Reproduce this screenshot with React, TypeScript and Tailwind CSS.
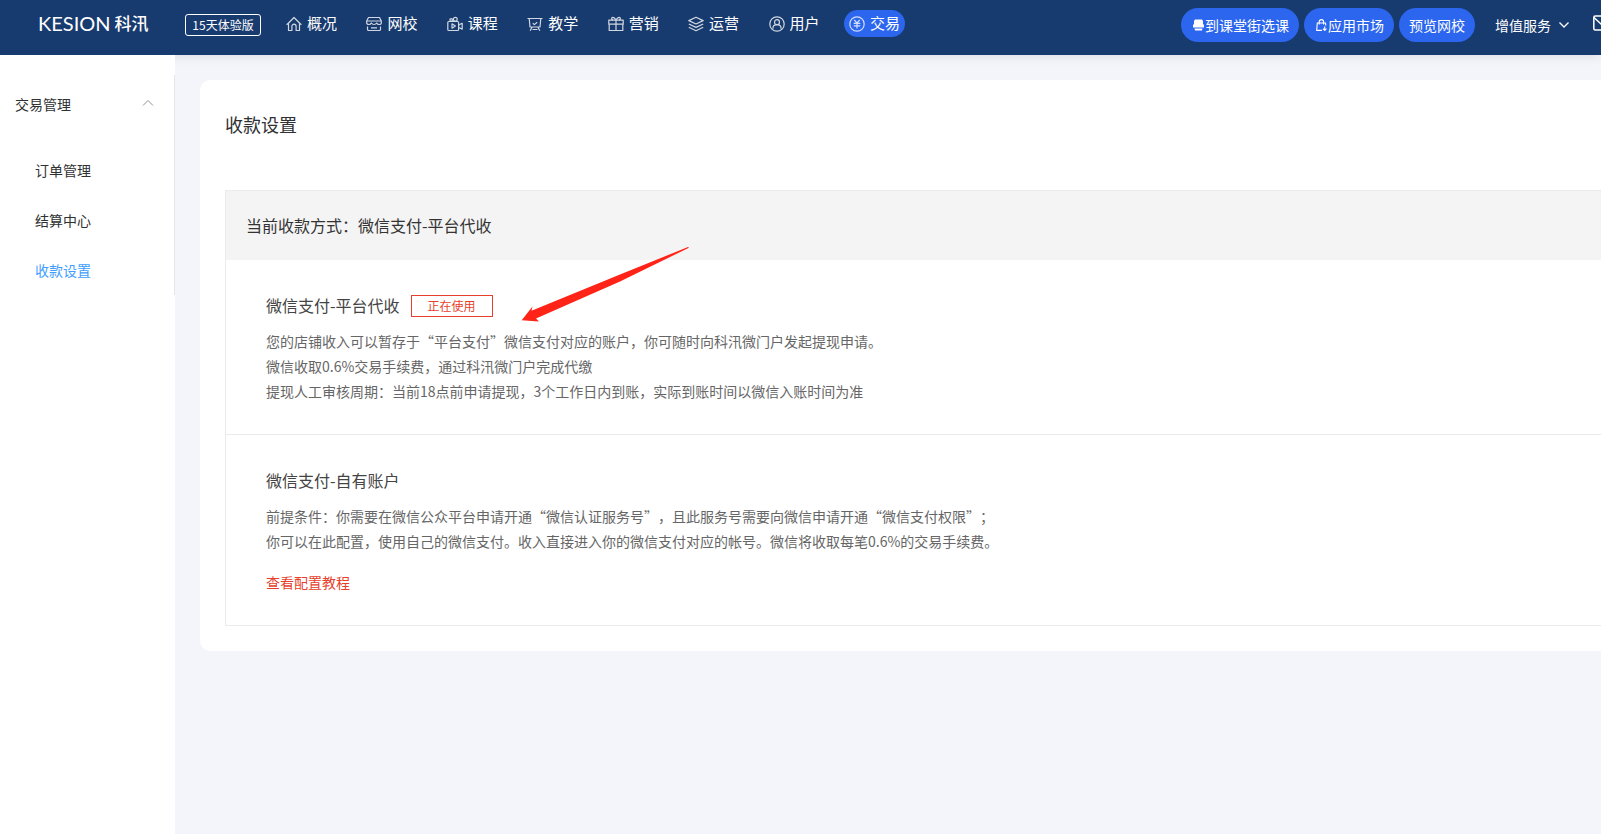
import React from 'react';

const navItems = [
  { label: '概况', icon: 'home' },
  { label: '网校', icon: 'shop' },
  { label: '课程', icon: 'camera' },
  { label: '教学', icon: 'board' },
  { label: '营销', icon: 'gift' },
  { label: '运营', icon: 'layers' },
  { label: '用户', icon: 'user' },
  { label: '交易', icon: 'yen', active: true },
];

const sideItems = [
  { label: '订单管理' },
  { label: '结算中心' },
  { label: '收款设置', active: true },
];

const iconShapes: Record<string, React.ReactNode> = {
  home: (
    <>
      <path d="M.6 8.800 2 7.500 8 1.500l6 6 1.400 1.300" />
      <path d="M2.500 7.200v7.300h3.400v-4.200a2.100 2.100 0 0 1 4.200 0v4.200h3.400V7.200" />
    </>
  ),
  shop: (
    <>
      <path d="M2.500 1.500h11l1.800 3.500v2c0 1-1 1.500-2.200 1.500S11 7.900 10.600 7C10 8 9.200 8.500 8 8.500S6 8 5.400 7C5 7.900 4 8.500 2.900 8.500S.7 8 .7 7V5z" />
      <path d="M.8 5h14.400M1.500 10.500v2.700c0 .8.500 1.300 1.300 1.300h10.400c.8 0 1.300-.5 1.300-1.300v-2.700M5 11.800h6" />
    </>
  ),
  camera: (
    <>
      <rect x=".8" y="5.500" width="10.800" height="9" rx="1" />
      <path d="M11.600 9l3.600-1.700v5.800l-3.600-1.600M5 7.800l3.400 2.200L5 12.200z" />
      <circle cx="4.200" cy="3.900" r="1.300" />
      <circle cx="8.300" cy="3.300" r="1.900" />
    </>
  ),
  board: (
    <>
      <path d="M.5 2.500h15M2.200 2.500 3 11h10l.8-8.500M5 11.200l-1.800 3.600M11 11.200l1.800 3.600M5.800 7.200l1.600 1.400 2.800-2.400M5.500 13.500h5" />
    </>
  ),
  gift: (
    <>
      <rect x=".8" y="4.200" width="14.400" height="4" />
      <path d="M1.200 8.200v6.300h13.600V8.200M8 4.200v10.300M8 4C6.500 1.500 4.500.8 3.800 2c-.5 1 .2 2 1.200 2M8 4c1.500-2.500 3.500-3.200 4.200-2 .5 1-.2 2-1.200 2" />
    </>
  ),
  layers: (
    <>
      <path d="M8 1.200l7.200 3.400L8 8 .8 4.600zM.8 8 8 11.400 15.200 8M.8 11.300 8 14.700l7.200-3.400" />
    </>
  ),
  user: (
    <>
      <circle cx="8" cy="8" r="7.200" />
      <circle cx="8" cy="6.200" r="2.500" />
      <path d="M4 12.800V12c0-2 1.600-3.300 4-3.300s4 1.300 4 3.300v.8" />
    </>
  ),
  yen: (
    <>
      <circle cx="8" cy="8" r="7.200" />
      <path d="M5.200 3.800 8 7l2.800-3.200M8 7v5.500M4.700 7.300h6.600M4.700 9.800h6.600" />
    </>
  ),
};

function NavIcon({ name }: { name: string }) {
  return (
    <svg
      viewBox="0 0 16 16"
      className="size-4 shrink-0 opacity-80"
      fill="none"
      stroke="currentColor"
      strokeWidth="1.2"
      strokeLinejoin="round"
    >
      {iconShapes[name]}
    </svg>
  );
}

function Header() {
  return (
    <header className="flex h-[55px] items-start overflow-hidden bg-[#183b6f] pl-[38px] text-white shadow-[0_2px_10px_rgba(0,0,0,0.09)]">
      <a href="#" className="mt-[11px] flex h-6 w-28 shrink-0 items-center gap-1">
        <span className="font-[Lato,sans-serif] text-xl leading-6">KESION</span>
        <span className="text-[17px] leading-6 font-medium whitespace-nowrap">科汛</span>
      </a>
      <span className="mt-3.5 ml-[35px] flex h-[22px] w-[76px] shrink-0 items-center justify-center rounded-[3px] border border-white text-xs">
        15天体验版
      </span>
      <nav className="mt-2.5 ml-5 flex w-[624px] shrink-0 justify-between">
        {navItems.map((item) => (
          <a
            key={item.label}
            href="#"
            className={`flex h-[27px] items-center gap-[5px] rounded-full px-[5px] text-[15px] ${
              item.active ? 'bg-[#2c66ee]' : ''
            }`}
          >
            <NavIcon name={item.icon} />
            {item.label}
          </a>
        ))}
      </nav>

      <div className="mt-2 -mr-2 ml-auto flex h-[34px] shrink-0 items-center gap-[5px] text-sm">
        <button type="button" className="flex h-full items-center gap-px rounded-full bg-[#2c66ee] pr-2.5 pl-3">
          <svg viewBox="0 0 11 12" className="h-3 w-[11px]" fill="currentColor">
            <path d="M2 .500h7l1 1.500v3l1 1v2.500H0V6l1-1V2z" />
            <path d="M1.500 9.500h8l-.5 2H2z" />
          </svg>
          到课堂街选课
        </button>
        <button type="button" className="flex h-full items-center gap-px rounded-full bg-[#2c66ee] pr-2.5 pl-3">
          <svg viewBox="0 0 11 12" className="h-3 w-[11px]" fill="none" stroke="currentColor" strokeWidth="1.100">
            <path d="M6 11.400H.700L1.300 4h8.200l.3 2.500M3.200 5.500V2.800a2.200 2.200 0 0 1 4.400 0v2.700M8.700 7.500v4M6.900 9.600l1.800 1.800 1.800-1.800" />
          </svg>
          应用市场
        </button>
        <button type="button" className="h-full rounded-full bg-[#2c66ee] px-2.5">
          预览网校
        </button>
        <button type="button" className="ml-[15px] flex h-full items-center gap-2">
          增值服务
          <svg viewBox="0 0 10 6" className="h-1.5 w-2.5" fill="none" stroke="currentColor" strokeWidth="1.300">
            <path d="M.5.5 5 5 9.500.5" />
          </svg>
        </button>
        <button type="button" aria-label="消息" className="ml-[19px]">
          <svg viewBox="0 0 16 16" className="mb-1 size-4" fill="none" stroke="currentColor" strokeWidth="1.500">
            <rect x=".8" y="1" width="14.400" height="14" rx="1.500" />
            <path d="M1 2.500 8 9l7-6.500" />
          </svg>
        </button>
      </div>
    </header>
  );
}

function Sidebar() {
  return (
    <aside className="relative w-[175px] shrink-0 bg-white pt-5 text-sm text-[#303133]">
      <div className="border-r border-[#e6e6e6]">
        <button type="button" className="flex h-[60px] w-full items-center justify-between pr-5 pb-0.5 pl-[15px]">
          交易管理
          <svg viewBox="0 0 12 12" className="mb-0.5 size-3" fill="none" stroke="#909399">
            <path d="M1 8.500 6 3.500l5 5" />
          </svg>
        </button>
        <ul className="pt-2.5">
          {sideItems.map((item) => (
            <li key={item.label}>
              <a
                href="#"
                className={`flex h-[50px] items-center pl-[35px] ${item.active ? 'text-[#409eff]' : ''}`}
              >
                {item.label}
              </a>
            </li>
          ))}
        </ul>
      </div>
    </aside>
  );
}

function Arrow() {
  return (
    <svg viewBox="0 0 168 76" className="pointer-events-none absolute top-[166px] left-[321px] h-[76px] w-[168px]">
      <path
        d="M.700 74.300 11.500 60.500 10.500 64.700 99 28.500 167 1 168 1.700 99 35.500 15 72.500 18 75.500z"
        fill="#ff2318"
      />
    </svg>
  );
}

export default function App() {
  return (
    <div
      className="flex min-h-screen flex-col overflow-x-hidden bg-[#f4f5fa] font-['Noto_Sans_CJK_SC',sans-serif] [text-spacing-trim:space-all]"
      lang="zh-CN"
    >
      <Header />
      <div className="flex grow">
        <Sidebar />
        <main className="min-w-0 grow pt-[25px] pl-[25px]">
          <div className="relative rounded-l-[10px] bg-white pt-[30px] pb-[25px] pl-[25px]">
            <h1 className="text-lg leading-7 text-[#303133]">收款设置</h1>

            <div className="mt-[52px] border-y border-l border-[#ebebeb]">
              <div className="flex h-[69px] items-center bg-[#f4f4f4] pb-0.5 pl-5 text-base text-[#333333]">
                当前收款方式：微信支付-平台代收
              </div>

              <section className="border-b border-[#ebebeb] px-10 pt-8 pb-[30px] text-sm leading-[25px] text-[#666666]">
                <div className="mb-[9px] flex h-7 items-center gap-[11px]">
                  <h2 className="pb-0.5 text-base text-[#444444]">微信支付-平台代收</h2>
                  <span className="flex h-[22px] w-[82px] items-center justify-center border border-[#e63f2b] text-xs text-[#e63f2b]">
                    正在使用
                  </span>
                </div>
                <p>您的店铺收入可以暂存于“平台支付”微信支付对应的账户，你可随时向科汛微门户发起提现申请。</p>
                <p>微信收取0.6%交易手续费，通过科汛微门户完成代缴</p>
                <p>提现人工审核周期：当前18点前申请提现，3个工作日内到账，实际到账时间以微信入账时间为准</p>
              </section>

              <section className="px-10 pt-8 pb-[30px] text-sm leading-[25px] text-[#666666]">
                <div className="mb-[9px] flex h-7 items-center">
                  <h2 className="pb-0.5 text-base text-[#444444]">微信支付-自有账户</h2>
                </div>
                <p>前提条件：你需要在微信公众平台申请开通“微信认证服务号”，且此服务号需要向微信申请开通“微信支付权限”；</p>
                <p>你可以在此配置，使用自己的微信支付。收入直接进入你的微信支付对应的帐号。微信将收取每笔0.6%的交易手续费。</p>
                <a href="#" className="mt-4 inline-block align-top text-[#e63f2b]">
                  查看配置教程
                </a>
              </section>
            </div>
            <Arrow />
          </div>
        </main>
      </div>
    </div>
  );
}
